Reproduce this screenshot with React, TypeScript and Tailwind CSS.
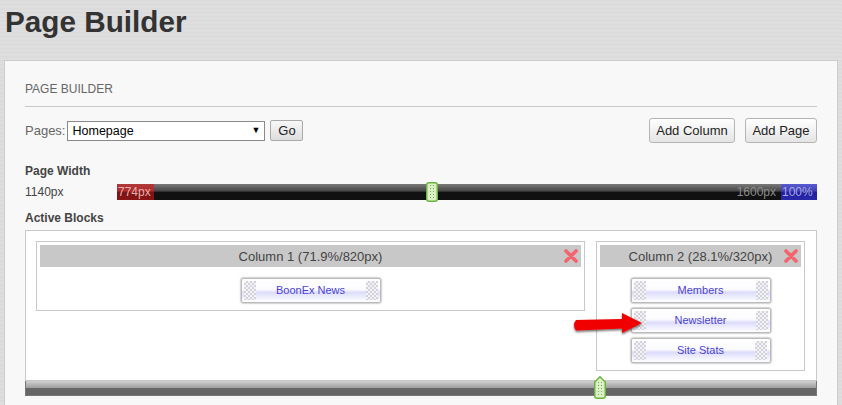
import React from "react";

const checker = "bg-[repeating-conic-gradient(#d2d2da_0%_25%,#f4f4f8_0%_50%)] bg-[length:4px_4px]";

function Block({ label }: { label: string }) {
  return (
    <div className="flex h-[25px] w-[140px] items-stretch justify-between rounded-[2px] border border-[#bbbbbb] bg-[linear-gradient(to_bottom,#ffffff_0%,#fbfbff_45%,#dcdcfb_58%,#f3f3ff_85%,#ffffff_100%)] p-[2px] shadow-[0_0_2px_#666666]">
      <div className={`w-[12px] ${checker}`} />
      <span className="text-[11px] leading-[19px] text-[#4a3fd0]">{label}</span>
      <div className={`w-[12px] ${checker}`} />
    </div>
  );
}

function CloseX() {
  return (
    <svg width="14" height="14" viewBox="0 0 14 14" className="absolute right-[3px] top-[4px]">
      <path d="M2 2 L12 12 M12 2 L2 12" stroke="#f4646c" strokeWidth="3.6" strokeLinecap="round" />
    </svg>
  );
}

function ColumnHeader({ label }: { label: string }) {
  return (
    <div className="relative h-[22px] bg-[#c8c8c8] text-center text-[13px] leading-[24px] text-[#444444]">
      {label}
      <CloseX />
    </div>
  );
}

function Dots({ x, y }: { x: number[]; y: number[] }) {
  return (
    <g fill="#6cb33f">
      {y.flatMap((b) => x.map((a) => <rect key={`${a}-${b}`} x={a} y={b} width="1" height="1" />))}
    </g>
  );
}

function TopHandle() {
  return (
    <svg width="12" height="20" viewBox="0 0 12 20" className="absolute left-[309px] top-[-2px]">
      <rect x="0.75" y="0.75" width="10.5" height="18.5" rx="2" fill="#dcefc8" stroke="#6cb33f" strokeWidth="1.5" />
      <Dots x={[4, 7]} y={[3, 6, 9, 12, 15]} />
    </svg>
  );
}

function BottomHandle() {
  return (
    <svg width="12" height="23" viewBox="0 0 12 23" className="absolute left-[568px] top-[-5px]">
      <path d="M0.75 6 L6 0.8 L11.25 6 V20 Q11.25 22.25 9 22.25 H3 Q0.75 22.25 0.75 20 Z" fill="#dcefc8" stroke="#6cb33f" strokeWidth="1.5" />
      <Dots x={[4, 7]} y={[6, 9, 12, 15, 18]} />
    </svg>
  );
}

export default function App() {
  return (
    <div className="h-[405px] w-[842px] overflow-hidden bg-[#dcdcdc] bg-[repeating-linear-gradient(0deg,#d9d9d9_0px,#e0e0e0_2px,#dadada_4px)] pl-[4px] pr-[4px] font-['Liberation_Sans',Arial,sans-serif]">
      <h1 className="ml-[1px] h-[60px] pt-[3px] text-[29.7px] font-bold leading-[38px] text-[#333333]">Page Builder</h1>
      <div className="h-[400px] border border-[#cccccc] bg-[#f8f8f8] px-[20px] pt-[20px]">
        <div className="h-[26px] border-b border-[#c8c8c8] text-[12px] leading-[17px] text-[#666666]">PAGE BUILDER</div>
        <div className="mt-[11px] flex h-[25px] items-center justify-between">
          <div className="flex h-[25px] items-center pt-[1px]">
            <span className="mr-[2px] text-[13px] text-[#666666]">Pages:</span>
            <div className="flex h-[20px] w-[198px] items-center justify-between border border-[#8a8a8a] bg-white pl-[4px] pr-[4px] text-[12.5px] text-black">
              <span>Homepage</span>
              <span className="text-[9px]">▼</span>
            </div>
            <button className="ml-[5px] mt-[-1px] h-[21px] w-[33px] rounded-[2px] border border-[#aaaaaa] bg-[linear-gradient(to_bottom,#f8f8f8,#dddddd)] text-[13px] text-[#222222]">Go</button>
          </div>
          <div className="flex gap-[10px]">
            <button className="h-[25px] w-[86px] rounded-[3px] border border-[#b4b4b4] bg-[linear-gradient(to_bottom,#ffffff,#e4e4e4)] text-[13px] text-[#222222]">Add Column</button>
            <button className="h-[25px] w-[72px] rounded-[3px] border border-[#b4b4b4] bg-[linear-gradient(to_bottom,#ffffff,#e4e4e4)] text-[13px] text-[#222222]">Add Page</button>
          </div>
        </div>

        <div className="mt-[21px] text-[12px] font-bold leading-[15px] text-[#444444]">Page Width</div>
        <div className="mt-[5px] flex h-[16px] items-center">
          <span className="w-[92px] text-[12px] text-[#444444]">1140px</span>
          <div className="relative flex h-[16px] flex-1 items-stretch justify-between bg-[linear-gradient(to_bottom,#7a7a7a_0%,#444444_45%,#111111_50%,#111111_100%)] text-[12px] leading-[16px]">
            <span className="w-[37px] bg-[linear-gradient(to_bottom,#b03a3a_0%,#b02a2a_45%,#7a1414_50%,#8a1414_100%)] pl-[1px] text-[#e8b0b0]">774px</span>
            <span className="flex">
              <span className="pr-[5px] text-[#8c8c8c]">1600px</span>
              <span className="w-[36px] bg-[linear-gradient(to_bottom,#5a5ad0_0%,#4040b8_45%,#1f1fa0_50%,#2a2aa8_100%)] pl-[1px] text-[#a8a8e0]">100%</span>
            </span>
            <TopHandle />
          </div>
        </div>

        <div className="mt-[10px] text-[12px] font-bold leading-[16px] text-[#444444]">Active Blocks</div>
        <div className="mt-[4px] h-[151px] border border-[#c8c8c8] bg-white pl-[10px] pr-[11px] pt-[10px]">
          <div className="relative flex items-start justify-between">
            <div className="h-[70px] w-[549px] border border-[#c8c8c8] p-[3px]">
              <ColumnHeader label="Column 1 (71.9%/820px)" />
              <div className="mt-[11px] flex justify-center">
                <Block label="BoonEx News" />
              </div>
            </div>
            <div className="h-[130px] w-[209px] border border-[#c8c8c8] p-[3px]">
              <ColumnHeader label="Column 2 (28.1%/320px)" />
              <div className="mt-[11px] flex flex-col items-center gap-[5px]">
                <Block label="Members" />
                <Block label="Newsletter" />
                <Block label="Site Stats" />
              </div>
            </div>
            <svg width="76" height="32" viewBox="0 0 76 32" className="absolute left-[536px] top-[66px]">
              <defs>
                <filter id="s" x="-20%" y="-30%" width="140%" height="170%">
                  <feDropShadow dx="0" dy="1.5" stdDeviation="1.2" floodColor="#000" floodOpacity="0.6" />
                </filter>
              </defs>
              <path d="M4 13 L50 12 L50 6 L70 16 L50 26 L50 21.5 L4 23.5 Q0 18 4 13 Z" fill="#f00000" filter="url(#s)" />
            </svg>
          </div>
        </div>
        <div className="relative h-[15px] border-b border-l border-r border-[#777777] bg-[linear-gradient(to_bottom,#d0d0d0_0%,#a0a0a0_48%,#666666_50%,#666666_100%)]">
          <BottomHandle />
        </div>
      </div>
    </div>
  );
}
